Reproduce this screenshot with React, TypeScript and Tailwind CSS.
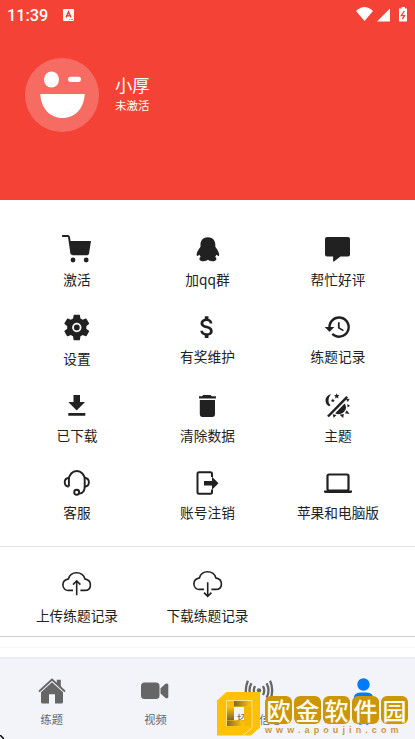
import type { ReactNode } from "react"
import clsx from "clsx"

type MenuItem = {
  label: string
  icon: ReactNode
  labelClass?: string
}

const GEAR =
  "M19.14 12.94c.04-.3.06-.61.06-.94 0-.32-.02-.64-.07-.94l2.03-1.58c.18-.14.23-.41.12-.61l-1.92-3.32c-.12-.22-.37-.29-.59-.22l-2.39.96c-.5-.38-1.03-.7-1.62-.94l-.36-2.54c-.04-.24-.24-.41-.48-.41h-3.84c-.24 0-.43.17-.47.41l-.36 2.54c-.59.24-1.13.57-1.62.94l-2.39-.96c-.22-.08-.47 0-.59.22L2.74 8.87c-.12.21-.08.47.12.61l2.03 1.58c-.05.3-.09.63-.09.94s.02.64.07.94l-2.03 1.58c-.18.14-.23.41-.12.61l1.92 3.32c.12.22.37.29.59.22l2.39-.96c.5.38 1.03.7 1.62.94l.36 2.54c.05.24.24.41.48.41h3.84c.24 0 .44-.17.47-.41l.36-2.54c.59-.24 1.13-.56 1.62-.94l2.39.96c.22.08.47 0 .59-.22l1.92-3.32c.12-.22.07-.47-.12-.61l-2.01-1.58z"

const DOLLAR =
  "M11.8 10.9c-2.27-.59-3-1.2-3-2.15 0-1.09 1.01-1.85 2.7-1.85 1.78 0 2.44.85 2.5 2.1h2.21c-.07-1.72-1.12-3.3-3.21-3.81V3h-3v2.16c-1.94.42-3.5 1.68-3.5 3.61 0 2.31 1.91 3.46 4.7 4.13 2.5.6 3 1.48 3 2.41 0 .69-.49 1.79-2.7 1.79-2.06 0-2.87-.92-2.98-2.1h-2.2c.12 2.19 1.76 3.42 3.68 3.83V21h3v-2.15c1.95-.37 3.5-1.5 3.5-3.55 0-2.84-2.43-3.81-4.7-4.4z"

const rows: MenuItem[][] = [
  [
    {
      label: "激活",
      icon: (
        <>
          <path d="M.8 2H5.8Q6.8 2 7 3L9.4 19.5" fill="none" stroke="currentColor" strokeWidth="1.9" strokeLinecap="round" />
          <path d="M7.6 7H29L27 19.5Q26.7 21.3 25 21.3H11.2Q9.3 21.3 9 19.5Z" />
          <circle cx="11" cy="26" r="2.4" />
          <circle cx="24.2" cy="26" r="2.4" />
        </>
      ),
    },
    {
      label: "加qq群",
      icon: (
        <path d="M14.9 3.2c-4.7 0-7.4 3.2-7.4 7.4v2.1c-1.5 2-4 5.4-3.9 8.1 0 1 .5 1.5 1.2 1 .6-.2 1.3-.6 1.7-1 .3.9.7 1.6 1.3 2.2-1 .4-1.4 1-1.4 1.9 0 1.6 2 2.3 4.3 2.3 1.6 0 3.2-.5 4.2-1.4 1 .9 2.6 1.4 4.2 1.4 2.3 0 4.3-.7 4.3-2.3 0-.9-.4-1.5-1.4-1.9.6-.6 1-1.3 1.3-2.2.4.4 1.100.8 1.700 1 .7.5 1.200 0 1.200-1 0-2.700-2.400-6.100-3.900-8.100v-2.100c0-4.200-2.700-7.400-7.400-7.400z" />
      ),
    },
    {
      label: "帮忙好评",
      icon: <path d="M4 3h21q2 0 2 2v15.500q0 2-2 2h-7.500L11 27.400h-.9v-5H4q-2 0-2-2V5q0-2 2-2z" />,
    },
  ],
  [
    {
      label: "设置",
      labelClass: "top-[1.5px]",
      icon: (
        <>
          <path d={GEAR} transform="translate(-1.2 -.5) scale(1.33)" />
          <circle cx="14.8" cy="15.5" r="3.8" fill="none" stroke="white" strokeWidth="1.8" />
        </>
      ),
    },
    {
      label: "有奖维护",
      icon: <path d={DOLLAR} transform="translate(-.4 .5) scale(1.22)" />,
    },
    {
      label: "练题记录",
      icon: (
        <path
          d="M13 3c-4.97 0-9 4.03-9 9H1l3.89 3.89.07.14L9 12H6c0-3.87 3.13-7 7-7s7 3.13 7 7-3.13 7-7 7c-1.93 0-3.68-.79-4.94-2.06l-1.42 1.42C8.27 19.99 10.51 21 13 21c4.97 0 9-4.03 9-9s-4.03-9-9-9zm-1 5v5l4.28 2.54.72-1.21-3.5-2.08V8H12z"
          transform="translate(.5 .7) scale(1.2)"
        />
      ),
    },
  ],
  [
    {
      label: "已下载",
      icon: <path d="M11.5 5h6.500v7h5L14.700 20.500 6.300 12h5.200zM6.300 23h17v2.700h-17z" />,
    },
    {
      label: "清除数据",
      icon: <path d="M10.200 5h7.300l1.400 1.300h4V8.600H6V6.300h3zM6.800 10H22v14.500q0 2.400-2.400 2.400H9.200q-2.400 0-2.400-2.400z" />,
    },
    {
      label: "主题",
      icon: (
        <>
          <path d="M8.200 4.300C4.500 5 2.500 7.700 2.500 10.500c0 3 1.800 5 3.900 5.700l1.200-1.100C6.200 14.200 5.500 12.500 5.500 10.500c0-2.500 1-4.500 2.700-6.200z" />
          <path d="m13.700 3.200.8 1.900 2 .1-1.500 1.300.5 2-1.800-1.100-1.700 1.100.5-2L11 5.200l2-.1z" />
          <path d="m9.800 8.500.6 1.300 1.400.1-1 1 .3 1.400-1.300-.7-1.200.7.3-1.400-1-1 1.400-.1z" />
          <path d="M5 26.500 24.200 6.800" fill="none" stroke="currentColor" strokeWidth="2.500" />
          <path d="M12.200 23.300 21.600 13.500c2 2.600 1.900 5.800-.3 8-2.500 2.700-6.200 3.400-9.100 1.800z" />
          <path d="m23 9.300 3.600-.6-1.700 3.400zM24.300 14l2.700 1.700-2.400 1.900zM23.800 20.300l2.700 3.800-4.500-.9zM16.600 24.800l4.200-.7-.6 3.800zM9.600 24.300l4 .8-2.900 2.700z" />
        </>
      ),
    },
  ],
  [
    {
      label: "客服",
      icon: (
        <g fill="none" stroke="currentColor" strokeWidth="1.9">
          <path d="M6.900 18.500V11.500a7.900 8.500 0 0 1 15.800 0V18.500c0 4.200-2.200 6.900-5.600 7.100" />
          <path d="M6.700 9.700C4 10.200 2.700 12 2.700 14.200s1.300 4 4 4.500M22.900 9.700c2.700.5 4 2.300 4 4.500s-1.300 4-4 4.500" />
          <circle cx="14.700" cy="24.200" r="2.500" />
        </g>
      ),
    },
    {
      label: "账号注销",
      icon: (
        <>
          <path d="M19 9V5.700q0-1.500-1.500-1.500H6Q4.500 4.200 4.500 5.700v18.600Q4.500 25.800 6 25.800h11.500q1.500 0 1.500-1.500V21.500" fill="none" stroke="currentColor" strokeWidth="2" />
          <path d="M11 13h8V8.800l6.500 6.500-6.500 6.500v-4.300h-8z" />
        </>
      ),
    },
    {
      label: "苹果和电脑版",
      icon: (
        <>
          <rect x="4.500" y="6.500" width="21" height="16" rx="1.500" fill="none" stroke="currentColor" strokeWidth="2.200" />
          <path d="M1 22.500h28v1.200q0 1.300-1.500 1.300h-25Q1 25 1 23.700z" />
        </>
      ),
    },
  ],
]

const CLOUD =
  "M11 21.400H6.700A5.300 5.300 0 0 1 .9 15.900Q.9 11 6.500 9.900C7.500 6 10.500 3.800 14.600 3.800c3.900 0 7.200 2.300 8.200 6.100Q28.400 11 28.400 15.900q0 5.500-5.800 5.500H18.400"

const syncItems: MenuItem[] = [
  {
    label: "上传练题记录",
    icon: (
      <g fill="none" stroke="currentColor" strokeWidth="1.600">
        <path d={CLOUD} />
        <path d="M14.700 26.200V12.200M11 15.600l3.700-3.800 3.700 3.800" />
      </g>
    ),
  },
  {
    label: "下载练题记录",
    icon: (
      <g fill="none" stroke="currentColor" strokeWidth="1.600">
        <path d={CLOUD} transform="translate(0 -1)" />
        <path d="M14.700 13.200V27M11 23.600l3.700 3.800 3.700-3.800" />
      </g>
    ),
  },
]

const tabs: MenuItem[] = [
  {
    label: "练题",
    icon: (
      <>
        <path d="M2 15.500 15 3.500 28 15.500" fill="none" stroke="currentColor" strokeWidth="1.800" />
        <path d="M19.800 3.800h4v7.500l-4-3.700zM4 16.200 15 6.300l11 9.900V26q0 1.500-1.500 1.500H18V18.300h-6v9.200H5.500Q4 27.500 4 26z" />
      </>
    ),
  },
  {
    label: "视频",
    icon: (
      <>
        <rect x="0" y="6.500" width="18.500" height="16.500" rx="3.500" />
        <path d="M19.500 12.200 24.500 7.700q2.800-1 2.800 1.300v11.700q0 2.300-2.800 1.200L19.500 17.500z" />
      </>
    ),
  },
  {
    label: "招聘信息",
    icon: (
      <g fill="none" stroke="currentColor" strokeWidth="2.300">
        <circle cx="15" cy="14.500" r="2.200" fill="currentColor" stroke="none" />
        <path d="M11 10q-2.400 4.500 0 9M7.400 7.300q-3.800 7.200 0 14.400M3.900 4.800q-4.200 9.700 0 19.400" />
        <path d="M19 10q2.400 4.500 0 9M22.600 7.300q3.800 7.200 0 14.400M26.100 4.800q4.200 9.700 0 19.400" />
      </g>
    ),
  },
  {
    label: "我",
    icon: (
      <>
        <circle cx="15.500" cy="8.500" r="6.200" />
        <path d="M5.500 28v-4.500q0-7 7-7h6q7 0 7 7v4.500z" />
      </>
    ),
  },
]

const rowLabelMargins = ["mt-[5px]", "mt-[4px]", "mt-[5px]", "mt-[4px]"]

const stamps = ["欧", "金", "软", "件", "园"]

function MenuCell({ item, margin }: { item: MenuItem; margin: string }) {
  return (
    <div className="flex flex-col items-center">
      <svg viewBox="0 0 30 30" className="size-[30px] shrink-0 overflow-visible" fill="currentColor">
        {item.icon}
      </svg>
      <span className={clsx("relative text-[13.7px] leading-5 whitespace-nowrap", margin, item.labelClass)}>{item.label}</span>
    </div>
  )
}

function StatusBar() {
  return (
    <div className="flex h-7 items-center pt-px pr-[7px] pl-[7px]">
      <span className="w-[41px] pt-[3px] font-[Roboto] text-[16.3px] leading-none font-medium">11:39</span>
      <svg viewBox="0 0 12 12" className="ml-[15px] size-3">
        <rect width="11" height="12" rx="1" fill="white" />
        <path d="M3 8.500 5.500 3 8 8.500M4 6.800h3" fill="none" stroke="#f44336" strokeWidth="1.600" />
        <path d="M6 10.500h1M8 10.500h2" stroke="#f44336" strokeWidth=".8" />
      </svg>
      <svg viewBox="0 0 52 16" className="ml-auto h-4 w-[52px]" fill="white">
        <path d="M0 4Q8.500-3.800 17 4L8.500 14z" />
        <path d="M34 1.500v13H21z" />
        <path d="M45.500 1.500V0h3.500v1.500h2V14.500h-8V1.500z" />
        <path d="m48.300 4-3 4.600h3.300l-2.300 3.500" fill="none" stroke="#f44336" strokeWidth="1.300" />
      </svg>
    </div>
  )
}

function Watermark() {
  return (
    <div className="absolute right-[7px] bottom-[3px] flex">
      <svg viewBox="0 0 43 44" className="mt-px h-11 w-[43px]">
        <defs>
          <linearGradient id="fold" x1="0" x2="1">
            <stop offset="0" stopColor="#80682a" />
            <stop offset=".9" stopColor="#ffc107" />
          </linearGradient>
          <linearGradient id="foldDown" x1="0" x2="0" y1="0" y2="1">
            <stop offset=".3" stopColor="#ffc107" />
            <stop offset="1" stopColor="#80682a" />
          </linearGradient>
        </defs>
        <path d="M9.500 0H43V35.500L34 43.500H0V8.500zM17 15V28.500H27V15z" fill="#ffc107" fillRule="evenodd" />
        <path d="M10 9h7v19h-7z" fill="url(#foldDown)" />
        <path d="M17 9H35v5.500H17z" fill="url(#fold)" />
        <path d="M9.500 28.500H27V34H9.500z" fill="url(#fold)" />
        <path d="M27 15h7.500v19H27z" fill="#f5b800" />
        <path d="M9.500 34.500V8.500H35V36L26.500 43" fill="none" stroke="#fff2c2" strokeWidth=".7" />
      </svg>
      <div className="ml-[5px] w-[143px]">
        <div className="flex gap-[2px] pt-[5px]">
          {stamps.map((char) => (
            <span
              key={char}
              className="flex h-[28px] w-[27px] items-center justify-center rounded-[6px] bg-[#cc9607] text-[24px] leading-none font-medium text-[#fffdf2]"
            >
              {char}
            </span>
          ))}
        </div>
        <div className="mt-px font-['Liberation_Sans'] text-[9px] leading-[11px] font-bold tracking-[4.1px] whitespace-nowrap text-[#cc9645]">
          www.apoujin.com
        </div>
      </div>
    </div>
  )
}

export default function App() {
  return (
    <div className="relative flex h-[739px] w-[415px] flex-col overflow-hidden bg-white font-['Noto_Sans_CJK_SC',sans-serif] text-[#212121]">
      <header className="h-[200px] shrink-0 bg-[#f44336] text-white">
        <StatusBar />
        <div className="flex items-start pt-[30px] pl-[25px]">
          <svg viewBox="0 0 74 74" className="size-[74px]">
            <circle cx="37" cy="37" r="37" fill="#f76c62" />
            <ellipse cx="26.5" cy="21.5" rx="7.5" ry="8" fill="white" />
            <rect x="43" y="18.7" width="13" height="5.3" rx="2.65" fill="white" />
            <path d="M15.3 36h44.4C59 50.5 50 60 37.5 60S16 50.5 15.3 36z" fill="white" />
          </svg>
          <div className="ml-[16px] pt-[15px]">
            <div className="text-[17.3px] leading-6">小厚</div>
            <div className="text-[11.5px] leading-4">未激活</div>
          </div>
        </div>
      </header>

      <main className="h-[457px] shrink-0">
        <div className="h-[347px] border-b border-[#e3e3e3] pt-[34px]">
          {rows.map((row, index) => (
            <div key={index} className="grid h-[78px] grid-cols-[130px_131px_130px] px-3">
              {row.map((item) => (
                <MenuCell key={item.label} item={item} margin={rowLabelMargins[index]} />
              ))}
            </div>
          ))}
        </div>
        <div className="grid h-[90px] grid-cols-[130px_131px_130px] border-b border-[#cfcfcf] px-3 pt-[22px]">
          {syncItems.map((item) => (
            <MenuCell key={item.label} item={item} margin="mt-[6px]" />
          ))}
        </div>
        <div className="h-[11px] border-b border-[#f7f7f7]" />
      </main>

      <nav className="grid grow grid-cols-4 border-t-2 border-[#ebebf1] bg-[#f3f4f9] pt-[17px] text-[#666]">
        {tabs.map((tab) => (
          <div key={tab.label} className={clsx("flex flex-col items-center", tab.label === "我" && "text-[#007aff]")}>
            <svg viewBox="0 0 30 30" className="size-[30px] shrink-0" fill="currentColor">
              {tab.icon}
            </svg>
            <span className="mt-[5px] text-[11.3px] leading-4">{tab.label}</span>
          </div>
        ))}
      </nav>

      <Watermark />
      <svg viewBox="0 0 4 4" className="absolute bottom-0 left-0 size-1">
        <path d="M0 0l4 4" stroke="black" strokeWidth="1.5" />
      </svg>
    </div>
  )
}
